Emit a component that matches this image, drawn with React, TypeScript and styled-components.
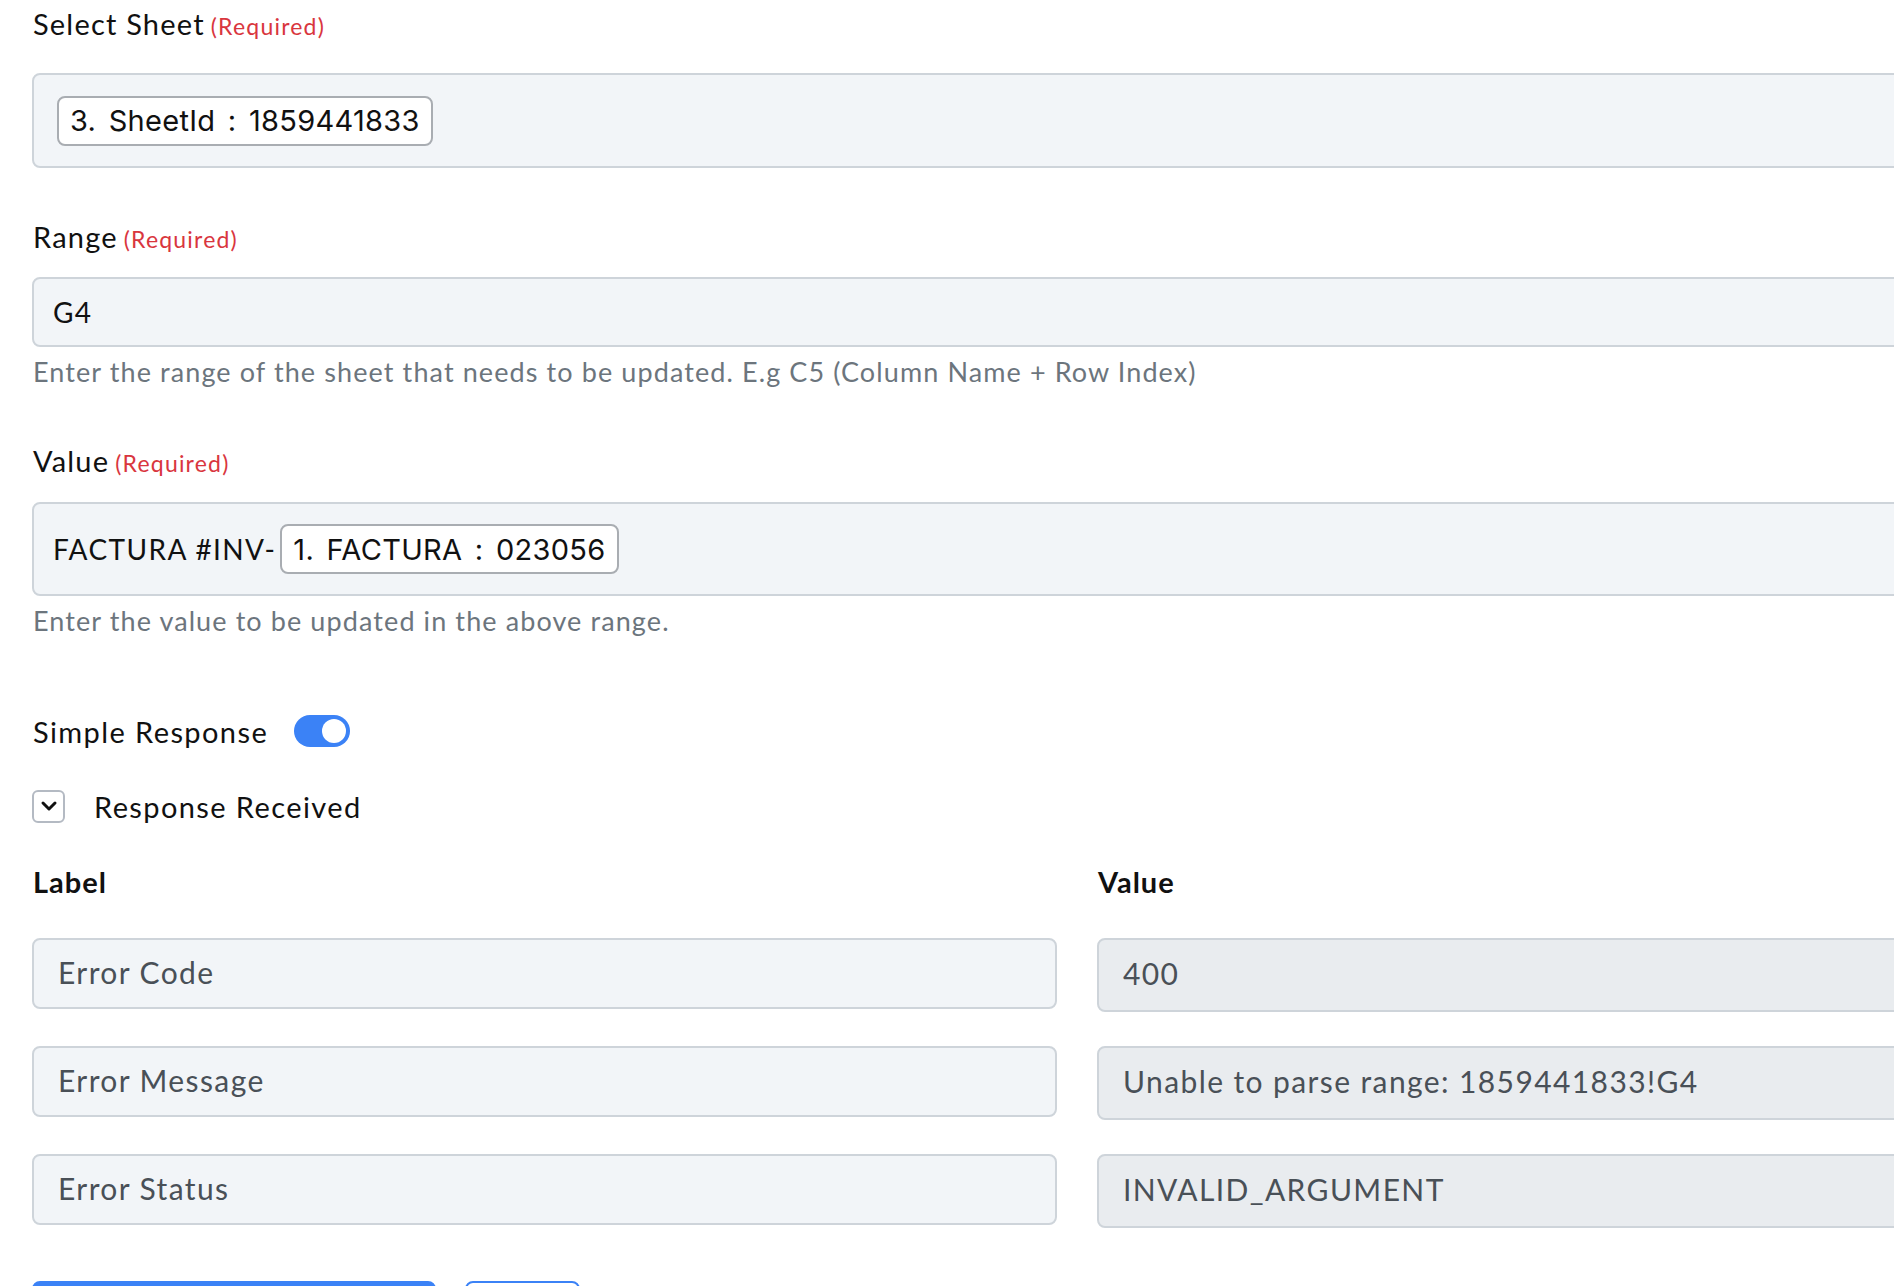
import React, {useState} from "react";
import styled, {createGlobalStyle} from "styled-components";
import {ChevronDown} from "lucide-react";

const GlobalStyle = createGlobalStyle`
  html, body {
    margin: 0;
    padding: 0;
    background: #ffffff;
    overflow: hidden;
  }

  body {
    font-family: "Lato", "Noto Sans", sans-serif;
    color: #111111;
    -webkit-font-smoothing: antialiased;
  }
`;

const Colors = {
    text: "#111111",
    muted: "#6c757d",
    inputText: "#495057",
    required: "#d9363e",
    border: "#ced4da",
    fieldBg: "#f2f5f8",
    readOnlyBg: "#e9ecef",
    chipBorder: "#a9adb2",
    primary: "#3b82f6",
};

const Page = styled.div`
  width: 2090px;
  padding: 4px 0 0 32px;
`;

const Field = styled.div<{ $top?: number }>`
  margin-top: ${(p) => p.$top ?? 0}px;
`;

const FieldLabel = styled.div<{ $gap: number }>`
  font-size: 29px;
  line-height: 40px;
  letter-spacing: 1.2px;
  margin-bottom: ${(p) => p.$gap}px;
  padding-left: 1px;

  span {
    color: ${Colors.required};
    font-size: 23px;
    line-height: 1;
    letter-spacing: 1.2px;
    margin-left: 6px;
  }
`;

const InputBox = styled.div<{ $height: number; $pad: number }>`
  box-sizing: border-box;
  height: ${(p) => p.$height}px;
  display: flex;
  align-items: center;
  padding: 0 ${(p) => p.$pad}px;
  background: ${Colors.fieldBg};
  border: 2px solid ${Colors.border};
  border-radius: 8px;
  font-size: 28px;
  letter-spacing: 1.4px;
  color: ${Colors.text};
  white-space: nowrap;
`;

const Token = styled.span`
  box-sizing: border-box;
  height: 50px;
  display: inline-flex;
  align-items: center;
  margin: 0 4px;
  padding: 0 11px;
  background: #ffffff;
  border: 2px solid ${Colors.chipBorder};
  border-radius: 8px;
  font-family: "Inter", "Liberation Sans", sans-serif;
  font-size: 29px;
  letter-spacing: 0.3px;
  word-spacing: 4px;
  color: #111111;
`;

const HelpText = styled.div`
  margin-top: 7px;
  padding-left: 1px;
  font-size: 27px;
  line-height: 36px;
  letter-spacing: 1.1px;
  color: ${Colors.muted};
`;

const InlineRow = styled.div<{ $top: number; $gap: number }>`
  display: flex;
  align-items: center;
  gap: ${(p) => p.$gap}px;
  height: 40px;
  margin-top: ${(p) => p.$top}px;
  font-size: 29px;
  letter-spacing: 1.4px;
  padding-left: 1px;
`;

const Switch = styled.button<{ $on: boolean }>`
  position: relative;
  width: 56px;
  height: 32px;
  padding: 0;
  border: none;
  border-radius: 16px;
  background: ${(p) => (p.$on ? Colors.primary : "#c5cad1")};
  cursor: pointer;

  &::after {
    content: "";
    position: absolute;
    top: 4px;
    left: ${(p) => (p.$on ? 28 : 4)}px;
    width: 24px;
    height: 24px;
    border-radius: 50%;
    background: #ffffff;
  }
`;

const CollapseButton = styled.button`
  box-sizing: border-box;
  width: 33px;
  height: 33px;
  display: flex;
  align-items: center;
  justify-content: center;
  padding: 0;
  margin-left: -1px;
  background: #ffffff;
  border: 2px solid #b4bac3;
  border-radius: 6px;
  color: #111111;
  cursor: pointer;
`;

const ResponseGrid = styled.div`
  display: grid;
  grid-template-columns: 1025px 1025px;
  column-gap: 40px;
  row-gap: 34px;
  margin-top: 36px;
  align-items: start;
`;

const ColumnHeading = styled.div`
  font-size: 29px;
  font-weight: 700;
  line-height: 40px;
  letter-spacing: 1px;
  padding-left: 1px;
  margin-bottom: 2px;
`;

const ResponseInput = styled.div<{ $readOnly?: boolean }>`
  box-sizing: border-box;
  height: ${(p) => (p.$readOnly ? 74 : 71)}px;
  display: flex;
  align-items: center;
  padding: 0 24px 4px;
  background: ${(p) => (p.$readOnly ? Colors.readOnlyBg : Colors.fieldBg)};
  border: 2px solid ${Colors.border};
  border-radius: 8px;
  font-size: 30px;
  letter-spacing: 1.4px;
  color: ${Colors.inputText};
`;

const ButtonRow = styled.div`
  display: flex;
  gap: 29px;
  margin-top: 53px;
`;

const PrimaryButton = styled.button`
  width: 404px;
  height: 64px;
  border: 2px solid ${Colors.primary};
  border-radius: 8px;
  background: ${Colors.primary};
  color: #ffffff;
  font-family: inherit;
  font-size: 28px;
`;

const OutlineButton = styled.button`
  width: 115px;
  height: 64px;
  border: 2px solid ${Colors.primary};
  border-radius: 8px;
  background: #ffffff;
  color: ${Colors.primary};
  font-family: inherit;
  font-size: 28px;
`;

const responseRows = [
    {label: "Error Code", value: "400"},
    {label: "Error Message", value: "Unable to parse range: 1859441833!G4"},
    {label: "Error Status", value: "INVALID_ARGUMENT"},
];

const App = () => {
    const [simple, setSimple] = useState(true);

    return (
        <Page>
            <GlobalStyle/>
            <Field>
                <FieldLabel $gap={29}>Select Sheet<span>(Required)</span></FieldLabel>
                <InputBox $height={95} $pad={19}>
                    <Token>3. SheetId : 1859441833</Token>
                </InputBox>
            </Field>

            <Field $top={49}>
                <FieldLabel $gap={20}>Range<span>(Required)</span></FieldLabel>
                <InputBox $height={70} $pad={19}>G4</InputBox>
                <HelpText>Enter the range of the sheet that needs to be updated. E.g C5 (Column Name + Row Index)</HelpText>
            </Field>

            <Field $top={51}>
                <FieldLabel $gap={21}>Value<span>(Required)</span></FieldLabel>
                <InputBox $height={94} $pad={19}>
                    FACTURA #INV-<Token>1. FACTURA : 023056</Token>
                </InputBox>
                <HelpText>Enter the value to be updated in the above range.</HelpText>
            </Field>

            <InlineRow $top={72} $gap={26}>
                Simple Response
                <Switch $on={simple} onClick={() => setSimple(!simple)} aria-label={"Simple Response"}/>
            </InlineRow>

            <InlineRow $top={35} $gap={29}>
                <CollapseButton aria-label={"Toggle response"}>
                    <ChevronDown size={24} strokeWidth={3}/>
                </CollapseButton>
                Response Received
            </InlineRow>

            <ResponseGrid>
                <ColumnHeading>Label</ColumnHeading>
                <ColumnHeading>Value</ColumnHeading>
                {responseRows.map((row) => (
                    <React.Fragment key={row.label}>
                        <ResponseInput>{row.label}</ResponseInput>
                        <ResponseInput $readOnly>{row.value}</ResponseInput>
                    </React.Fragment>
                ))}
            </ResponseGrid>

            <ButtonRow>
                <PrimaryButton>Save</PrimaryButton>
                <OutlineButton>Test</OutlineButton>
            </ButtonRow>
        </Page>
    );
};

export default App;
